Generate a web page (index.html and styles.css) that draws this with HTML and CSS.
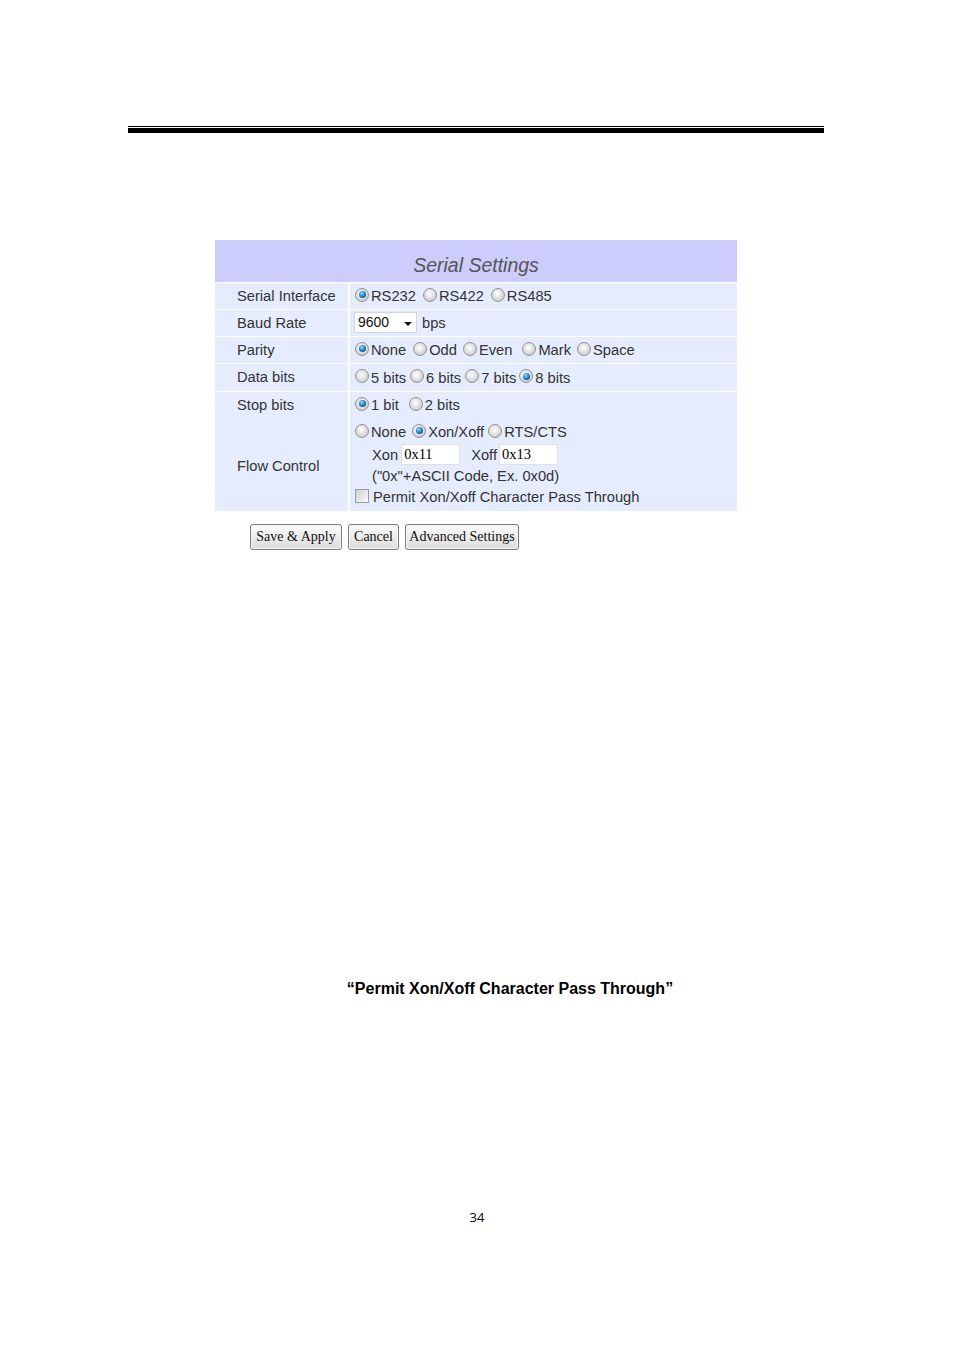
FILE: index.html
```html
<!DOCTYPE html>
<html>
<head>
<meta charset="utf-8">
<link rel="stylesheet" href="styles.css">
</head>
<body>
<div class="page">
  <div class="rule-thin"></div>
  <div class="rule-thick"></div>

  <div class="panel">
    <div class="head">Serial Settings</div>

    <div class="row">
      <div class="lbl">Serial Interface</div>
      <div class="val">
        <span class="opt first"><span class="radio on"></span>RS232</span>
        <span class="opt"><span class="radio"></span>RS422</span>
        <span class="opt"><span class="radio"></span>RS485</span>
      </div>
    </div>

    <div class="row">
      <div class="lbl">Baud Rate</div>
      <div class="val">
        <span class="select">9600<span class="arrow"></span></span>
        <span class="unit">bps</span>
      </div>
    </div>

    <div class="row">
      <div class="lbl">Parity</div>
      <div class="val">
        <span class="opt first"><span class="radio on"></span>None</span>
        <span class="opt"><span class="radio"></span>Odd</span>
        <span class="opt mid"><span class="radio"></span>Even</span>
        <span class="opt wide"><span class="radio"></span>Mark</span>
        <span class="opt mid"><span class="radio"></span>Space</span>
      </div>
    </div>

    <div class="row r-data">
      <div class="lbl">Data bits</div>
      <div class="val">
        <span class="opt first"><span class="radio"></span>5 bits</span>
        <span class="opt tight"><span class="radio"></span>6 bits</span>
        <span class="opt tight"><span class="radio"></span>7 bits</span>
        <span class="opt snug"><span class="radio on"></span>8 bits</span>
      </div>
    </div>

    <div class="row tall">
      <div class="lbl stack">
        <div class="sub-top">Stop bits</div>
        <div class="sub-rest">Flow Control</div>
      </div>
      <div class="val stack">
        <div class="line l-stop">
          <span class="opt first"><span class="radio on"></span>1 bit</span>
          <span class="opt wide"><span class="radio"></span>2 bits</span>
        </div>
        <div class="line l-flow">
          <span class="opt first"><span class="radio"></span>None</span>
          <span class="opt mid"><span class="radio on"></span>Xon/Xoff</span>
          <span class="opt tight"><span class="radio"></span>RTS/CTS</span>
        </div>
        <div class="line l-inputs">
          <span class="ilabel">Xon</span><span class="field">0x11</span>
          <span class="ilabel second">Xoff</span><span class="field">0x13</span>
        </div>
        <div class="line l-note">("0x"+ASCII Code, Ex. 0x0d)</div>
        <div class="line l-check"><span class="check"></span>Permit Xon/Xoff Character Pass Through</div>
      </div>
    </div>
  </div>

  <div class="buttons">
    <span class="btn b-save">Save &amp; Apply</span>
    <span class="btn b-cancel">Cancel</span>
    <span class="btn b-adv">Advanced Settings</span>
  </div>

  <div class="caption">“Permit Xon/Xoff Character Pass Through”</div>

  <div class="pagenum">34</div>
</div>
</body>
</html>
```

FILE: styles.css
```css
html, body {
  margin: 0;
  padding: 0;
  background: #ffffff;
}

.page {
  width: 954px;
  height: 1350px;
  font-family: "Liberation Sans", Arial, sans-serif;
  color: #333;
  overflow: hidden;
}

.rule-thin {
  margin: 126px 0 0 128px;
  width: 696px;
  height: 1px;
  background: #000;
}

.rule-thick {
  margin: 1px 0 0 128px;
  width: 696px;
  height: 5px;
  background: #000;
}

.panel {
  margin: 107px 0 0 215px;
  width: 522px;
}

.head {
  height: 42px;
  background: #ccccfd;
  box-sizing: border-box;
  padding-top: 13px;
  line-height: 24px;
  text-align: center;
  font-style: italic;
  font-size: 19.5px;
  color: #555;
}

.row {
  display: grid;
  grid-template-columns: 133px 1fr;
  column-gap: 2px;
  margin-top: 1px;
  height: 26px;
}

.row.r-data {
  height: 27px;
}

.row.tall {
  height: 119px;
}

.lbl, .val {
  background: #e5ecfd;
  font-size: 14.7px;
  line-height: 26px;
  white-space: nowrap;
}

.lbl {
  padding-left: 22px;
}

.val {
  padding-left: 4px;
  display: flex;
  align-items: center;
}

.stack {
  display: flex;
  flex-direction: column;
  align-items: stretch;
}

.sub-top {
  height: 26px;
  line-height: 26px;
}

.sub-rest {
  flex: 1;
  display: flex;
  align-items: center;
  padding-top: 2px;
}

.line {
  display: flex;
  align-items: center;
}

.l-stop { height: 26px; }
.l-flow { height: 24px; margin-top: 2px; }
.l-inputs { height: 21px; padding-left: 18px; }
.l-note { height: 22px; padding-left: 18px; line-height: 22px; }
.l-check { height: 20px; padding-left: 1px; }

.opt {
  display: inline-flex;
  align-items: center;
  margin-left: 7px;
}

.opt.first { margin-left: 1px; }
.opt.tight { margin-left: 4px; }
.opt.snug { margin-left: 3px; }
.opt.mid { margin-left: 6px; }
.opt.wide { margin-left: 10px; }

.radio {
  display: inline-block;
  position: relative;
  width: 14px;
  height: 14px;
  box-sizing: border-box;
  border-radius: 50%;
  border: 1px solid #939393;
  background: radial-gradient(circle at 45% 40%, #ffffff 0%, #e2e2e2 45%, #b9b9b9 100%);
  margin-right: 2px;
  margin-top: -3px;
}

.radio.on::after {
  content: "";
  position: absolute;
  left: 2.5px;
  top: 2.5px;
  width: 7px;
  height: 7px;
  border-radius: 50%;
  background: radial-gradient(circle at 40% 35%, #8fdcff 0%, #1a80c6 50%, #0a3a66 100%);
}

.select {
  position: relative;
  display: inline-block;
  width: 63px;
  height: 21px;
  box-sizing: border-box;
  background: #fff;
  border: 1px solid #d2d6de;
  font-size: 14px;
  line-height: 19px;
  padding-left: 3px;
  color: #111;
  margin-top: -2px;
}

.arrow {
  position: absolute;
  right: 4px;
  top: 9px;
  width: 0;
  height: 0;
  border-left: 4px solid transparent;
  border-right: 4px solid transparent;
  border-top: 4px solid #111;
}

.unit {
  margin-left: 5px;
}

.ilabel {
  margin-right: 3px;
}

.ilabel.second {
  margin-left: 11px;
  margin-right: 2px;
}

.field {
  display: inline-block;
  width: 59px;
  height: 21px;
  box-sizing: border-box;
  background: #fff;
  border: 1px solid #dde0e6;
  font-family: "Liberation Serif", "Times New Roman", serif;
  font-size: 14.5px;
  line-height: 19px;
  padding-left: 2px;
  color: #000;
}

.check {
  display: inline-block;
  width: 14px;
  height: 14px;
  box-sizing: border-box;
  border: 1px solid #9a9a9a;
  background: linear-gradient(135deg, #d0d0d0 0%, #efefef 70%, #ffffff 100%);
  margin-right: 4px;
  margin-top: -3px;
}

.buttons {
  display: flex;
  gap: 6px;
  margin: 13px 0 0 250px;
}

.btn {
  display: inline-block;
  height: 26px;
  box-sizing: border-box;
  border: 1px solid #7a7a7a;
  border-radius: 3px;
  box-shadow: inset 0 0 0 1px #f8f8f8;
  background: linear-gradient(#fbfbfb 0%, #ececec 50%, #dcdcdc 100%);
  font-family: "Liberation Serif", "Times New Roman", serif;
  font-size: 14px;
  line-height: 24px;
  color: #111;
  text-align: center;
}

.b-save { width: 92px; }
.b-cancel { width: 51px; }
.b-adv { width: 114px; }

.caption {
  margin: 429px 0 0 0;
  padding-left: 66px;
  text-align: center;
  font-weight: bold;
  font-size: 16px;
  line-height: 20px;
  color: #000;
}

.pagenum {
  margin-top: 209px;
  text-align: center;
  font-family: "Open Sans", "Noto Sans", sans-serif;
  font-size: 13px;
  line-height: 18px;
  color: #000;
}
```
